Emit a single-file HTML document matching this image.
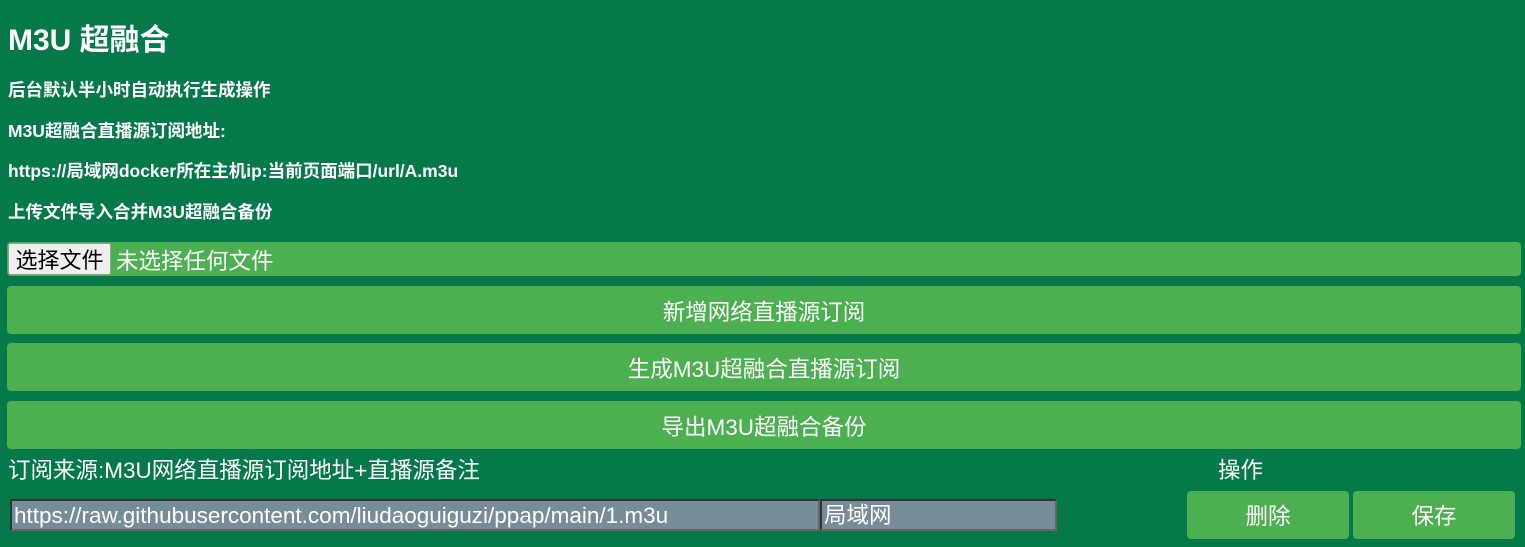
<!DOCTYPE html>
<html><head><meta charset="utf-8"><style>
*{box-sizing:border-box}
body{margin:0;width:1525px;height:547px;background:#06794a;color:#fff;font-family:"Liberation Sans","Noto Sans CJK SC",sans-serif;overflow:hidden;position:relative}
.a{position:absolute}
h1{position:absolute;left:8px;top:15px;margin:0;font-size:30px;font-weight:bold}
.s{position:absolute;left:8px;font-size:17.5px;font-weight:bold}
.bar{position:absolute;left:7px;width:1514px;background:#4caf50;border-radius:4px;text-align:center;font-size:22.5px}
.btn{position:absolute;background:#4caf50;border-radius:4px;text-align:center;font-size:22.5px;line-height:52px;height:48px;top:491px}
.in{position:absolute;top:499px;height:32px;background:#778c99;border:2px solid #333;border-right-color:#666;border-bottom-color:#666;color:#fff;font-size:22.5px;line-height:30px;padding-left:2px;white-space:nowrap;overflow:hidden}
</style></head><body>
<h1>M3U 超融合</h1>
<div class="s" style="top:77px">后台默认半小时自动执行生成操作</div>
<div class="s" style="top:118px">M3U超融合直播源订阅地址:</div>
<div class="s" style="top:158px">https://局域网docker所在主机ip:当前页面端口/url/A.m3u</div>
<div class="s" style="top:199px">上传文件导入合并M3U超融合备份</div>
<div class="bar" style="top:242px;height:34px"></div>
<div class="a" style="left:8px;top:243px;width:103px;height:32px;background:#efefef;border:1px solid #999;border-radius:2px;color:#000;font-size:22px;line-height:34px;text-align:center">选择文件</div>
<div class="a" style="left:116px;top:245px;font-size:22.5px;line-height:34px">未选择任何文件</div>
<div class="bar" style="top:286px;height:48px;line-height:54px">新增网络直播源订阅</div>
<div class="bar" style="top:343px;height:48px;line-height:54px">生成M3U超融合直播源订阅</div>
<div class="bar" style="top:401px;height:48px;line-height:54px">导出M3U超融合备份</div>
<div class="a" style="left:8px;top:455px;font-size:22.5px;line-height:32px">订阅来源:M3U网络直播源订阅地址+直播源备注</div>
<div class="a" style="left:1218px;top:455px;font-size:22.5px;line-height:32px">操作</div>
<div class="in" style="left:10px;width:810px">https://raw.githubusercontent.com/liudaoguiguzi/ppap/main/1.m3u</div>
<div class="in" style="left:820px;width:237px">局域网</div>
<div class="btn" style="left:1187px;width:162px">删除</div>
<div class="btn" style="left:1353px;width:162px">保存</div>
</body></html>
